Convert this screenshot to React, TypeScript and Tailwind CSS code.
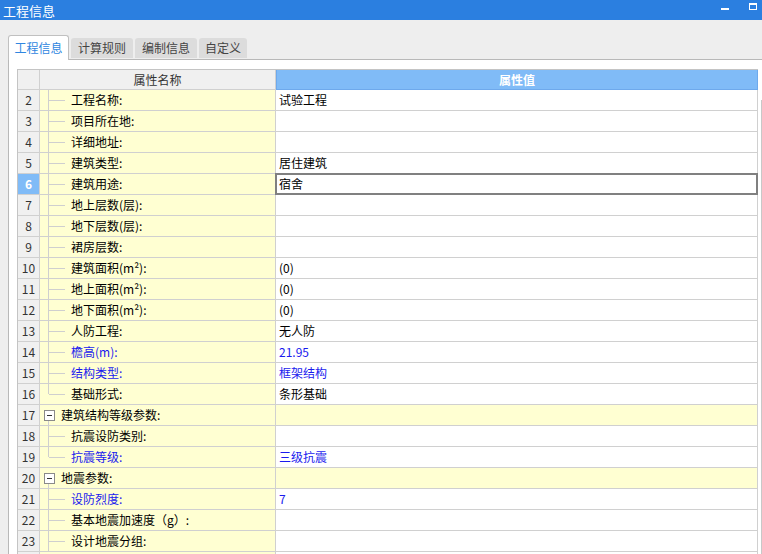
// Project info panel — property grid with tree-style labels.

type Row = {
  n: number;
  label?: string;
  value?: string;
  blue?: boolean;
  group?: boolean;
  last?: boolean;
  selected?: boolean;
};

const rows: Row[] = [
  { n: 2, label: "工程名称:", value: "试验工程" },
  { n: 3, label: "项目所在地:" },
  { n: 4, label: "详细地址:" },
  { n: 5, label: "建筑类型:", value: "居住建筑" },
  { n: 6, label: "建筑用途:", value: "宿舍", selected: true },
  { n: 7, label: "地上层数(层):" },
  { n: 8, label: "地下层数(层):" },
  { n: 9, label: "裙房层数:" },
  { n: 10, label: "建筑面积(m²):", value: "(0)" },
  { n: 11, label: "地上面积(m²):", value: "(0)" },
  { n: 12, label: "地下面积(m²):", value: "(0)" },
  { n: 13, label: "人防工程:", value: "无人防" },
  { n: 14, label: "檐高(m):", value: "21.95", blue: true },
  { n: 15, label: "结构类型:", value: "框架结构", blue: true },
  { n: 16, label: "基础形式:", value: "条形基础", last: true },
  { n: 17, label: "建筑结构等级参数:", group: true },
  { n: 18, label: "抗震设防类别:" },
  { n: 19, label: "抗震等级:", value: "三级抗震", blue: true, last: true },
  { n: 20, label: "地震参数:", group: true },
  { n: 21, label: "设防烈度:", value: "7", blue: true },
  { n: 22, label: "基本地震加速度（g）:" },
  { n: 23, label: "设计地震分组:" },
  // partially visible row at the bottom edge, text scrolled out of view
  { n: 24 },
];

const tabs = ["工程信息", "计算规则", "编制信息", "自定义"];

function TreeLines({ row }: { row: Row }) {
  if (row.group) {
    return (
      <>
        <span className="absolute left-[4px] top-[5px] w-[11px] h-[11px] border border-[#8a8a8a] bg-white flex items-center justify-center">
          <span className="w-[5px] h-px bg-[#333]" />
        </span>
        <span className="absolute left-[8px] top-[16px] bottom-0 w-px bg-[#cfcfcf]" />
      </>
    );
  }
  if (!row.label) return null;
  return (
    <>
      <span
        className={
          row.last
            ? "absolute left-[8px] top-0 h-[10px] w-px bg-[#cfcfcf]"
            : "absolute left-[8px] top-0 bottom-0 w-px bg-[#cfcfcf]"
        }
      />
      <span className="absolute left-[9px] top-[10px] w-[16px] h-px bg-[#cfcfcf]" />
    </>
  );
}

function GridRow({ row }: { row: Row }) {
  const textColor = row.blue ? "text-[#1a1aee]" : "text-black";
  return (
    <div className="flex h-[21px]">
      <div
        className={
          row.selected
            ? "w-[22px] shrink-0 border-r border-b border-[#d0d0d0] bg-[#80bbf7] text-white font-bold text-[12px] flex items-center justify-center"
            : "w-[22px] shrink-0 border-r border-b border-[#d0d0d0] bg-[#f0f0f0] text-[#333] text-[12px] flex items-center justify-center"
        }
      >
        {row.label ? row.n : null}
      </div>
      <div className="relative w-[236px] shrink-0 border-r border-b border-[#d0d0d0] bg-[#ffffd2] text-[12px] flex items-center">
        <TreeLines row={row} />
        <span className={row.group ? "pl-[21px] text-black" : `pl-[31px] ${textColor}`}>
          {row.label}
        </span>
      </div>
      <div
        className={
          row.group
            ? "relative flex-1 border-r border-b border-[#d0d0d0] bg-[#ffffd2] text-[12px] flex items-center pl-[3px]"
            : "relative flex-1 border-r border-b border-[#d0d0d0] bg-white text-[12px] flex items-center pl-[3px]"
        }
      >
        <span className={textColor}>{row.value}</span>
        {row.selected ? (
          <span className="absolute -top-px -left-px -right-px -bottom-px border-2 border-[#808080]" />
        ) : null}
      </div>
    </div>
  );
}

export default function App() {
  return (
    <div
      className="w-[762px] h-[554px] overflow-hidden bg-[#eeeeee] flex flex-col"
      style={{ fontFamily: '"Noto Sans CJK SC", "Noto Sans", sans-serif' }}
    >
      {/* title bar */}
      <div className="h-[20px] shrink-0 bg-[#2b7fe0] flex items-center pl-[3px] pr-[5px]">
        <span className="text-white text-[13px] leading-none">工程信息</span>
        <span className="ml-auto w-[8px] h-[2px] bg-white mt-[-2px]" />
        <span className="ml-[20px] w-[8px] h-[7px] border border-t-2 border-white mt-[-7px]" />
      </div>

      {/* tabs */}
      <div className="h-[39px] shrink-0 flex items-end pl-[8px] gap-[2px] relative z-10">
        {tabs.map((t, i) =>
          i === 0 ? (
            <div
              key={t}
              className="h-[25px] w-[61px] -mb-px bg-white border border-b-0 border-[#c0c0c0] rounded-t-[3px] text-[12px] text-[#2f86e0] flex items-center justify-center"
            >
              {t}
            </div>
          ) : (
            <div
              key={t}
              className={
                i === 3
                  ? "h-[20px] w-[48px] mb-px bg-[#dcdcdc] rounded-t-[3px] text-[12px] text-[#444] flex items-center justify-center"
                  : "h-[20px] w-[62px] mb-px bg-[#dcdcdc] rounded-t-[3px] text-[12px] text-[#444] flex items-center justify-center"
              }
            >
              {t}
            </div>
          )
        )}
      </div>

      {/* panel */}
      <div className="flex-1 ml-[8px] bg-white border-l border-t border-[#b8b8b8] pt-[9px] pl-[8px] flex">
        <div className="w-[741px] shrink-0 border-l border-t border-[#c4c4c4]">
          <div className="flex h-[20px]">
            <div className="w-[22px] shrink-0 border-r border-b border-[#d0d0d0] bg-[#f0f0f0]" />
            <div className="w-[236px] shrink-0 border-r border-b border-[#d0d0d0] bg-[#f0f0f0] text-[12px] text-[#333] flex items-center justify-center">
              属性名称
            </div>
            <div className="flex-1 border border-t-0 border-[#6ea9ec] bg-[#80bbf7] text-[12px] text-white font-bold flex items-center justify-center">
              属性值
            </div>
          </div>
          {rows.map((r) => (
            <GridRow key={r.n} row={r} />
          ))}
        </div>
        <div className="ml-[3px] w-px mt-[31px] bg-[#c8c8c8]" />
      </div>
    </div>
  );
}
